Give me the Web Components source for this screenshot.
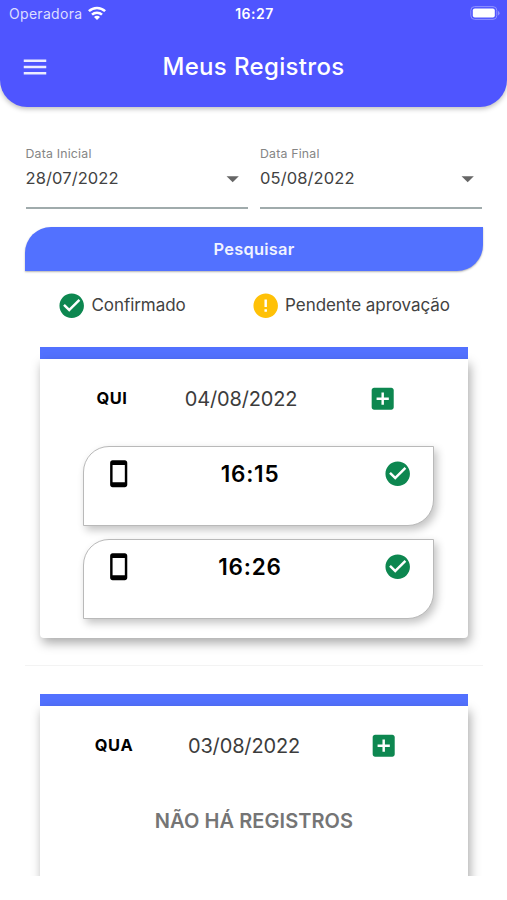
<!DOCTYPE html>
<html lang="pt-BR">
<head>
<meta charset="utf-8">
<title>Meus Registros</title>
<style>
body {
  margin: 0;
  background: white;
  font-family: Inter, "Liberation Sans", sans-serif;
}
</style>
</head>
<body>

<records-page>
  <app-header slot="header" heading="Meus Registros"></app-header>
  <date-field slot="dates" label="Data Inicial">28/07/2022</date-field>
  <date-field slot="dates" label="Data Final">05/08/2022</date-field>
  <search-button slot="search">Pesquisar</search-button>
  <status-label slot="legend" icon="check">Confirmado</status-label>
  <status-label slot="legend" icon="error">Pendente aprovação</status-label>

  <day-card day="QUI" date="04/08/2022" style="--columns: 144px 114px 170px">
    <time-record>16:15</time-record>
    <time-record>16:26</time-record>
  </day-card>
  <list-divider></list-divider>
  <day-card day="QUA" date="03/08/2022" style="--columns: 148px 112px 168px">
    <empty-note>NÃO HÁ REGISTROS</empty-note>
  </day-card>
</records-page>

<script>
class BaseElement extends HTMLElement {
  connectedCallback() {
    if (this.shadowRoot) return;
    let t = document.createElement("template");
    t.innerHTML = this.template;
    this.attachShadow({ mode: "open" });
    this.shadowRoot.appendChild(t.content.cloneNode(true));
  }
}

/* 24 unit glyphs, sized by --size */

const ICONS = {
  menu: "M3 18h18v-2H3v2zm0-5h18v-2H3v2zm0-7v2h18V6H3z",
  caret: "M7 10l5 5 5-5z",
  check: "M12 2C6.48 2 2 6.48 2 12s4.48 10 10 10 10-4.48 10-10S17.52 2 12 2zm-2 15l-5-5 1.41-1.41L10 14.17l7.59-7.59L19 8l-9 9z",
  error: "M12 2C6.48 2 2 6.48 2 12s4.48 10 10 10 10-4.48 10-10S17.52 2 12 2zm1 15h-2v-2h2v2zm0-4h-2V7h2v6z",
  add: "M19 3H5c-1.11 0-2 .9-2 2v14c0 1.1.89 2 2 2h14c1.1 0 2-.9 2-2V5c0-1.1-.9-2-2-2zm-2 10h-4v4h-2v-4H7v-2h4V7h2v4h4v2z",
  phone: "M17 1.01L7 1c-1.1 0-1.99.9-1.99 2v18c0 1.1.89 2 1.99 2h10c1.1 0 2-.9 2-2V3c0-1.1-.9-1.99-2-1.99zM17 19H7V5h10v14z"
};

class MatIcon extends BaseElement {
  get template() {
    return `
    <style>
    :host {
      display: block;
      flex: none;
      width: var(--size, 29.4px);
      height: var(--size, 29.4px);
    }

    svg {
      display: block;
      width: 100%;
      height: 100%;
      fill: currentColor;
    }
    </style>
    <svg viewBox="0 0 24 24"><path d="${ICONS[this.getAttribute("name")]}"/></svg>
    `;
  }
}

class StatusBar extends BaseElement {
  get template() {
    return `
    <style>
    :host {
      display: grid;
      grid-template-columns: 1fr auto 1fr;
      align-items: center;
      height: 27px;
      padding: 0 7px 0 9px;
      font-size: 14px;
      line-height: 27px;
    }

    .carrier {
      display: flex;
      align-items: center;
      gap: 6px;
      color: #dcddff;
      letter-spacing: .3px;
    }

    .carrier svg {
      margin-top: -2px;
    }

    .clock {
      font-weight: 600;
      letter-spacing: .5px;
    }

    svg {
      display: block;
    }

    .battery {
      justify-self: end;
      margin-top: -1px;
    }
    </style>
    <div class="carrier">
      <span>Operadora</span>
      <svg width="18" height="14" viewBox="0 0 18 14" fill="none" stroke="white" stroke-width="2.5">
        <path d="M.9 5.2a11.6 11.6 0 0 1 16.2 0M4 8.7a7.2 7.2 0 0 1 10 0"/>
        <path d="M9 14L6 11a4.2 4.2 0 0 1 6 0z" fill="white" stroke="none"/>
      </svg>
    </div>
    <div class="clock">16:27</div>
    <svg class="battery" width="30" height="14" viewBox="0 0 30 14">
      <rect x=".8" y=".6" width="26" height="12.8" rx="3.8" fill="none" stroke="#9092ff"/>
      <rect x="2.8" y="2.5" width="22" height="9" rx="2" fill="white"/>
      <path d="M28 5v4.4q1.6-.6 1.6-2.2t-1.6-2.2" fill="#9092ff"/>
    </svg>
    `;
  }
}

class AppHeader extends BaseElement {
  get template() {
    return `
    <style>
    :host {
      display: block;
      height: 107px;
      border-radius: 0 0 27px 27px;
      background: #4f55ff;
      color: white;
      box-shadow: 0 2px 5px rgba(0, 0, 0, .26);
    }

    .toolbar {
      display: grid;
      grid-template-columns: 30px 1fr 30px;
      align-items: center;
      height: 79px;
      padding: 0 20px;
    }

    mat-icon {
      --size: 30px;
      color: #ececff;
    }

    h1 {
      margin: 0;
      font-size: 24px;
      font-weight: 500;
      line-height: 32px;
      letter-spacing: .35px;
      text-align: center;
    }
    </style>
    <status-bar></status-bar>
    <div class="toolbar">
      <mat-icon name="menu"></mat-icon>
      <h1>${this.getAttribute("heading")}</h1>
    </div>
    `;
  }
}

class DateField extends BaseElement {
  get template() {
    return `
    <style>
    :host {
      display: block;
      height: 60px;
      border-bottom: 2px solid #a0abac;
    }

    label {
      display: block;
      height: 14px;
      color: #858585;
      font-size: 12.3px;
      line-height: 14px;
      letter-spacing: .2px;
    }

    .value {
      display: flex;
      align-items: center;
      justify-content: space-between;
      height: 35px;
      color: #424242;
      font-size: 16.5px;
      line-height: 35px;
      letter-spacing: .1px;
    }

    mat-icon {
      color: #666;
    }
    </style>
    <label>${this.getAttribute("label")}</label>
    <div class="value"><span><slot></slot></span><mat-icon name="caret"></mat-icon></div>
    `;
  }
}

class SearchButton extends BaseElement {
  get template() {
    return `
    <style>
    :host {
      display: block;
    }

    button {
      display: block;
      width: 100%;
      height: 44px;
      padding: 0;
      border: 0;
      border-radius: 26px 0 26px 0;
      background: #5271ff;
      box-shadow: 0 1px 2px rgba(0, 0, 0, .3);
      color: #f1f3ff;
      font: 600 16.4px/44px Inter, "Liberation Sans", sans-serif;
      letter-spacing: .25px;
    }
    </style>
    <button><slot></slot></button>
    `;
  }
}

class StatusLabel extends BaseElement {
  get template() {
    return `
    <style>
    :host {
      display: flex;
      align-items: center;
      gap: 5px;
      color: #424242;
      font-size: 17px;
      line-height: 31px;
      letter-spacing: -.05px;
      white-space: nowrap;
    }

    mat-icon {
      color: #0d8750;
    }

    mat-icon[name="error"] {
      color: #ffc107;
    }
    </style>
    <mat-icon name="${this.getAttribute("icon")}"></mat-icon>
    <span><slot></slot></span>
    `;
  }
}

class DayCard extends BaseElement {
  get template() {
    return `
    <style>
    :host {
      display: block;
      margin: 0 15px;
      border-top: 12px solid #5271ff;
    }

    .body {
      padding-bottom: 19px;
      border-radius: 0 0 4px 4px;
      background: white;
      box-shadow: 2px 5px 11px rgba(0, 0, 0, .34);
    }

    .head {
      display: grid;
      grid-template-columns: var(--columns);
      align-items: center;
      justify-items: center;
      height: 79px;
      margin-bottom: 8px;
    }

    .day {
      padding-bottom: 1px;
      font-size: 16.4px;
      font-weight: 700;
      letter-spacing: .6px;
    }

    .date {
      color: #3c3c3c;
      font-size: 20px;
      letter-spacing: -.15px;
    }

    mat-icon {
      color: #0d8750;
    }

    .records {
      display: flex;
      flex-direction: column;
      gap: 13px;
      margin: 0 34px 0 43px;
    }
    </style>
    <div class="body">
      <div class="head">
        <div class="day">${this.getAttribute("day")}</div>
        <div class="date">${this.getAttribute("date")}</div>
        <mat-icon name="add"></mat-icon>
      </div>
      <div class="records"><slot></slot></div>
    </div>
    `;
  }
}

class TimeRecord extends BaseElement {
  get template() {
    return `
    <style>
    :host {
      display: grid;
      grid-template-columns: 30px 1fr 46px;
      align-items: start;
      box-sizing: border-box;
      height: 80px;
      padding: 12px 20.5px 0 19.5px;
      border: 1px solid #b9b9b9;
      border-radius: 26px 0 26px 0;
      background: white;
      box-shadow: 3px 4px 8px rgba(0, 0, 0, .24);
    }

    .time {
      font-size: 22.5px;
      font-weight: 600;
      line-height: 30px;
      letter-spacing: .8px;
      text-align: center;
    }

    .status {
      justify-self: end;
      color: #0d8750;
    }
    </style>
    <mat-icon name="phone"></mat-icon>
    <div class="time"><slot></slot></div>
    <mat-icon class="status" name="check"></mat-icon>
    `;
  }
}

class EmptyNote extends BaseElement {
  get template() {
    return `
    <style>
    :host {
      display: block;
      height: 160px;
      margin-right: 9px;
      padding-top: 13px;
      color: #757575;
      font-size: 20px;
      font-weight: 600;
      line-height: 30px;
      letter-spacing: .07px;
      text-align: center;
      white-space: nowrap;
    }
    </style>
    <slot></slot>
    `;
  }
}

class ListDivider extends BaseElement {
  get template() {
    return `
    <style>
    :host {
      display: block;
      height: 1px;
      margin: 27px 0 28px;
      background: #f3f3f3;
    }
    </style>
    `;
  }
}

class RecordsPage extends BaseElement {
  get template() {
    return `
    <style>
    :host {
      display: flex;
      flex-direction: column;
      height: 876px;
      overflow: hidden;
    }

    .filters {
      padding: 40px 24px 0 25px;
    }

    .dates {
      display: grid;
      grid-template-columns: 222px 222px;
      gap: 12.5px;
      padding-left: .5px;
      margin-bottom: 18px;
    }

    .legend {
      display: flex;
      gap: 65px;
      margin: 19px 0 0 32px;
    }

    /* scrolling list, cut off above the home indicator */

    .list {
      flex: 1;
      min-height: 0;
      overflow: hidden;
      padding: 26px 24px 0 25px;
    }
    </style>
    <slot name="header"></slot>
    <div class="filters">
      <div class="dates"><slot name="dates"></slot></div>
      <slot name="search"></slot>
      <div class="legend"><slot name="legend"></slot></div>
    </div>
    <div class="list"><slot></slot></div>
    `;
  }
}

customElements.define("mat-icon", MatIcon);
customElements.define("status-bar", StatusBar);
customElements.define("app-header", AppHeader);
customElements.define("date-field", DateField);
customElements.define("search-button", SearchButton);
customElements.define("status-label", StatusLabel);
customElements.define("day-card", DayCard);
customElements.define("time-record", TimeRecord);
customElements.define("empty-note", EmptyNote);
customElements.define("list-divider", ListDivider);
customElements.define("records-page", RecordsPage);
</script>
</body>
</html>
